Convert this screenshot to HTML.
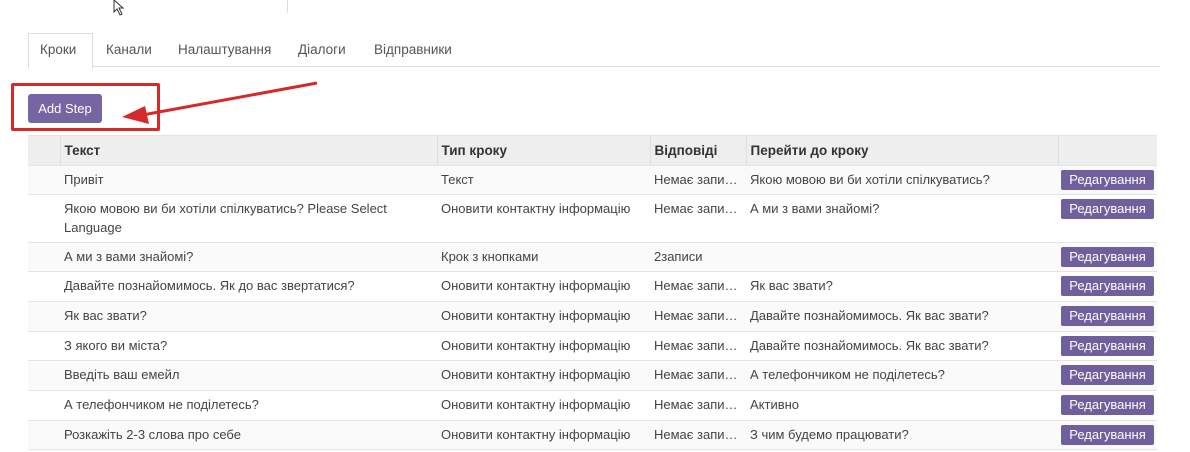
<!DOCTYPE html>
<html><head><meta charset="utf-8"><style>
body{margin:0;width:1190px;height:452px;background:#fff;font-family:"Liberation Sans",sans-serif;font-size:13px;color:#444;position:relative;overflow:hidden}
.abs{position:absolute}
.tab{position:absolute;top:42px;font-size:13.5px;color:#555}
table{position:absolute;left:28px;top:135px;width:1129px;border-collapse:collapse;table-layout:fixed}
td,th{padding:0 4px;text-align:left;vertical-align:top;border-top:1px solid #e4e4e4;line-height:19px;white-space:nowrap;overflow:hidden}
th{background:#eee;height:29px;vertical-align:middle;font-weight:bold;color:#333;border-left:1px solid #e0e0e0;font-size:13.5px}
th:first-child{border-left:none}
td{padding-top:4px;height:24px}
tr.t td{height:25px}
td.w{white-space:normal}
.b{display:inline-block;width:93px;text-align:center;background:#6f5f9c;color:#fff;border-radius:2px;line-height:20px;font-size:13px;margin-left:-1px}
tr.g td{background:#fafafa}
</style></head><body>
<div class="abs" style="left:287px;top:0;width:1px;height:13px;background:#ddd"></div>
<svg class="abs" style="left:112px;top:0" width="20" height="16"><path d="M2 0 L2 12 L5 9 L8 15 L10 14 L7 8 L11 8 Z" fill="#fff" stroke="#333" stroke-width="1"/></svg>
<div class="abs" style="left:28px;top:33px;width:63px;height:34px;border:1px solid #ddd;border-bottom:1px solid #fff;background:#fff;z-index:2"></div>
<div class="abs" style="left:28px;top:66px;width:1132px;height:1px;background:#ddd"></div>
<div class="tab" style="left:40px;z-index:3">Кроки</div>
<div class="tab" style="left:106px">Канали</div>
<div class="tab" style="left:178px">Налаштування</div>
<div class="tab" style="left:298px">Діалоги</div>
<div class="tab" style="left:374px">Відправники</div>
<div class="abs" style="left:28px;top:94px;width:74px;height:29px;background:#7565a3;border-radius:3px;color:#fff;font-size:13px;line-height:29px;text-align:center">Add Step</div>
<div class="abs" style="left:11px;top:83px;width:143px;height:42px;border:3px solid #d42a2a;border-radius:2px"></div>
<svg class="abs" style="left:115px;top:78px" width="210" height="50"><line x1="202" y1="5" x2="22" y2="38" stroke="#d42a2a" stroke-width="3"/><path d="M7 39 L30 28 L34 46 Z" fill="#d42a2a"/></svg>
<table>
<colgroup><col style="width:32px"><col style="width:377px"><col style="width:213px"><col style="width:96px"><col style="width:312px"><col></colgroup>
<tr><th></th><th>Текст</th><th>Тип кроку</th><th>Відповіді</th><th>Перейти до кроку</th><th></th></tr>
<tr class="g"><td></td><td>Привіт</td><td>Текст</td><td>Немає запи…</td><td>Якою мовою ви би хотіли спілкуватись?</td><td><span class="b">Редагування</span></td></tr>
<tr><td style="height:43px"></td><td class="w">Якою мовою ви би хотіли спілкуватись? Please Select Language</td><td>Оновити контактну інформацію</td><td>Немає запи…</td><td>А ми з вами знайомі?</td><td><span class="b">Редагування</span></td></tr>
<tr class="g"><td></td><td>А ми з вами знайомі?</td><td>Крок з кнопками</td><td>2записи</td><td></td><td><span class="b">Редагування</span></td></tr>
<tr class="t"><td></td><td>Давайте познайомимось. Як до вас звертатися?</td><td>Оновити контактну інформацію</td><td>Немає запи…</td><td>Як вас звати?</td><td><span class="b">Редагування</span></td></tr>
<tr class="g t"><td></td><td>Як вас звати?</td><td>Оновити контактну інформацію</td><td>Немає запи…</td><td>Давайте познайомимось. Як вас звати?</td><td><span class="b">Редагування</span></td></tr>
<tr><td></td><td>З якого ви міста?</td><td>Оновити контактну інформацію</td><td>Немає запи…</td><td>Давайте познайомимось. Як вас звати?</td><td><span class="b">Редагування</span></td></tr>
<tr class="g t"><td></td><td>Введіть ваш емейл</td><td>Оновити контактну інформацію</td><td>Немає запи…</td><td>А телефончиком не поділетесь?</td><td><span class="b">Редагування</span></td></tr>
<tr class="t"><td></td><td>А телефончиком не поділетесь?</td><td>Оновити контактну інформацію</td><td>Немає запи…</td><td>Активно</td><td><span class="b">Редагування</span></td></tr>
<tr class="g"><td style="border-bottom:1px solid #e4e4e4"></td><td style="border-bottom:1px solid #e4e4e4">Розкажіть 2-3 слова про себе</td><td style="border-bottom:1px solid #e4e4e4">Оновити контактну інформацію</td><td style="border-bottom:1px solid #e4e4e4">Немає запи…</td><td style="border-bottom:1px solid #e4e4e4">З чим будемо працювати?</td><td style="border-bottom:1px solid #e4e4e4"><span class="b">Редагування</span></td></tr>
</table>
</body></html>
